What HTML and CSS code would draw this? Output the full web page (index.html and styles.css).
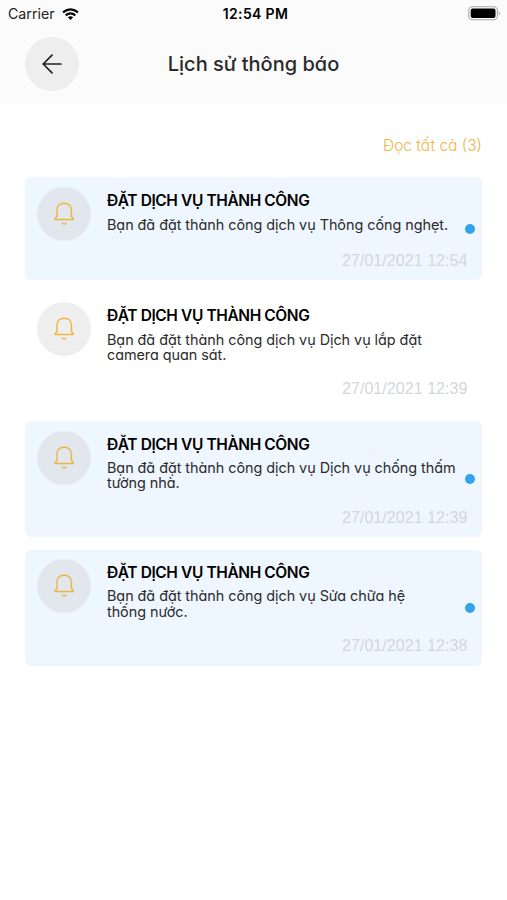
FILE: index.html
```html
<!DOCTYPE html>
<html lang="vi">
<head>
<meta charset="utf-8">
<title>Lịch sử thông báo</title>
<link rel="stylesheet" href="styles.css">
</head>
<body>
<svg class="defs" width="0" height="0" aria-hidden="true">
  <symbol id="bell" viewBox="0 0 22 24">
    <path d="M2 17.4H20.4L18.4 14V8.4C18.4 4 15.4 1.2 11.2 1.2S4 4 4 8.4V14Z" fill="none" stroke="currentColor" stroke-width="1.5" stroke-linecap="round" stroke-linejoin="round"/>
    <path d="M9.4 21.2Q11.2 22.8 13 21.2" fill="none" stroke="currentColor" stroke-width="1.5" stroke-linecap="round"/>
  </symbol>
</svg>
<header class="top">
  <div class="status">
    <div class="carrier"><span>Carrier</span>
      <svg class="wifi" viewBox="0 0 17 12"><g fill="none" stroke="#000" stroke-width="2.2"><path d="M1 4.4Q8.5 -1.8 16 4.4"/><path d="M3.7 7.4Q8.5 3.4 13.3 7.4"/></g><path d="M5.8 9.3Q8.5 7.2 11.2 9.3L8.5 12Z"/></svg>
    </div>
    <div class="clock">12:54 PM</div>
    <svg class="battery" viewBox="0 0 33 15"><rect x=".8" y=".8" width="28.6" height="13" rx="3.8" fill="#fff" stroke="#a5a5a5" stroke-width="1.1"/><rect x="2.7" y="2.6" width="24.8" height="9.4" rx="2"/><path d="M30.8 5.3Q33 7.3 30.8 9.3Z" fill="#999"/></svg>
  </div>
  <div class="nav">
    <div class="back"><svg viewBox="0 0 20 20"><path d="M19 10H1.5M10 1.2L1.2 10L10 18.8" fill="none" stroke="#222" stroke-width="1.7" stroke-linecap="round" stroke-linejoin="round"/></svg></div>
    <h1>Lịch sử thông báo</h1>
  </div>
</header>
<main>
  <div class="read-all">Đọc tất cả (3)</div>
  <article class="card unread short">
    <div class="icon"><svg><use href="#bell"/></svg></div>
    <div class="body"><h2>ĐẶT DỊCH VỤ THÀNH CÔNG</h2><p>Bạn đã đặt thành công dịch vụ Thông cống nghẹt.</p><time>27/01/2021 12:54</time></div>
    <i class="dot"></i>
  </article>
  <article class="card">
    <div class="icon"><svg><use href="#bell"/></svg></div>
    <div class="body"><h2>ĐẶT DỊCH VỤ THÀNH CÔNG</h2><p>Bạn đã đặt thành công dịch vụ Dịch vụ lắp đặt<br>camera quan sát.</p><time>27/01/2021 12:39</time></div>
  </article>
  <article class="card unread">
    <div class="icon"><svg><use href="#bell"/></svg></div>
    <div class="body"><h2>ĐẶT DỊCH VỤ THÀNH CÔNG</h2><p>Bạn đã đặt thành công dịch vụ Dịch vụ chống thấm<br>tường nhà.</p><time>27/01/2021 12:39</time></div>
    <i class="dot"></i>
  </article>
  <article class="card unread">
    <div class="icon"><svg><use href="#bell"/></svg></div>
    <div class="body"><h2>ĐẶT DỊCH VỤ THÀNH CÔNG</h2><p>Bạn đã đặt thành công dịch vụ Sửa chữa hệ<br>thống nước.</p><time>27/01/2021 12:38</time></div>
    <i class="dot"></i>
  </article>
</main>
</body>
</html>
```
FILE: styles.css
```css
* { box-sizing: border-box; margin: 0; }
body { width: 507px; height: 900px; overflow: hidden; background: #fff; color: #000; font-family: Inter, "Open Sans", sans-serif; font-feature-settings: "cv11"; white-space: nowrap; }
.defs { display: block; }
.top { height: 104px; background: #fbfbfb; }
.status { height: 27px; padding: 0 6px 0 8px; display: grid; grid-template-columns: 1fr auto 1fr; align-items: center; font-feature-settings: normal; }
.carrier { display: flex; align-items: center; gap: 7px; font-size: 14.2px; color: #222; }
.wifi { width: 17px; height: 12px; }
.clock { margin-left: 2px; font-size: 14px; font-weight: 600; letter-spacing: .35px; }
.battery { width: 33px; height: 15px; justify-self: end; }
.nav { height: 74px; padding: 0 25px; display: grid; grid-template-columns: 54px 1fr 54px; align-items: center; }
.back { width: 54px; height: 54px; border-radius: 50%; background: #eee; display: grid; place-items: center; }
.back svg { width: 20px; height: 20px; }
h1 { text-align: center; font-size: 20px; line-height: 24px; font-weight: 500; color: #2a2a2a; }
main { padding: 31px 25px 0; display: flex; flex-direction: column; gap: 12.5px; }
.read-all { height: 29.9px; line-height: 21px; text-align: right; color: #ecb64b; font-size: 15.5px; font-weight: 300; }
.card { position: relative; height: 115.9px; padding: 9.2px 14.5px 0 12.4px; display: flex; gap: 15.6px; border-radius: 6px; }
.short { height: 103.1px; }
.unread { background: #eef6ff; }
.icon { flex: none; width: 54px; height: 54px; border-radius: 50%; background: #eee; color: #efb643; display: grid; place-items: center; }
.unread .icon { background: #e1e7ec; }
.icon svg { width: 22px; height: 24px; }
.body { flex: 1; display: flex; flex-direction: column; padding-bottom: 9.5px; }
h2 { margin-top: 4px; font-size: 15.5px; line-height: 20px; font-weight: 600; letter-spacing: -.4px; }
p { margin-top: 5.5px; font-size: 14.4px; line-height: 15.2px; letter-spacing: -.04px; color: #2b2b2b; }
.short p { margin-top: 6.3px; }
time { margin-top: auto; align-self: flex-end; font: 16px/20px "Liberation Sans", Arial, sans-serif; letter-spacing: .06px; color: #d4d6da; }
.dot { position: absolute; right: 7px; top: 50%; margin-top: -5px; width: 10px; height: 10px; border-radius: 50%; background: #32a4ee; }
```
